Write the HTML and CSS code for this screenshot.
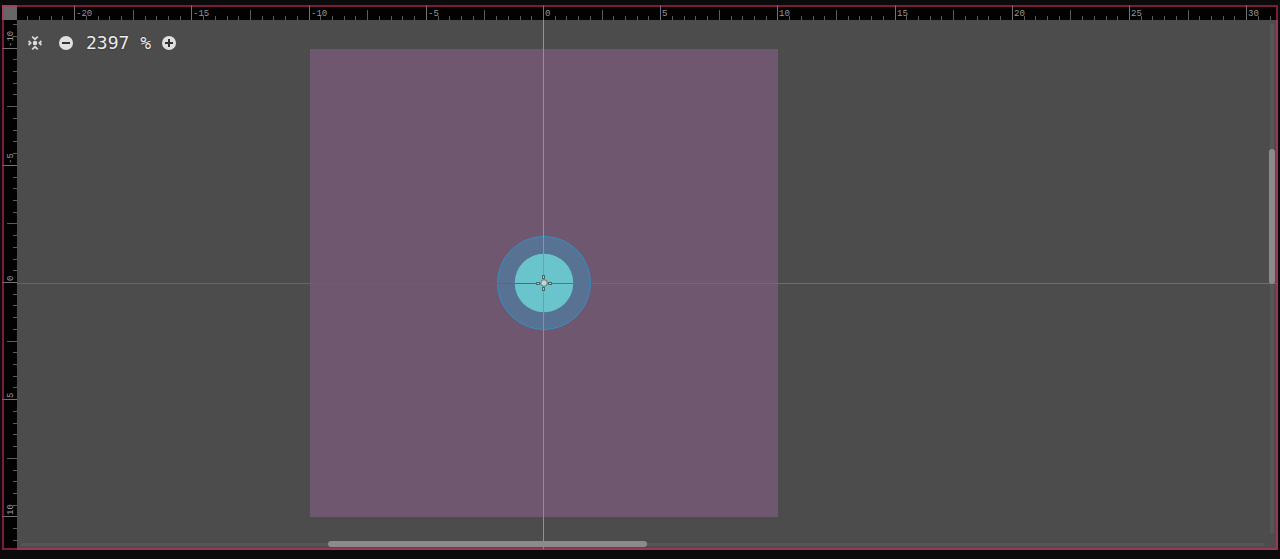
FILE: index.html
```
<!DOCTYPE html>
<html lang="en">
<head>
<meta charset="utf-8">
<title>2D Viewport</title>
<link rel="stylesheet" href="styles.css">
</head>
<body>
<main class="editor">
  <div class="corner"></div>
  <svg class="ruler ruler-x" id="ruler-x" aria-hidden="true"></svg>
  <svg class="ruler ruler-y" id="ruler-y" aria-hidden="true"></svg>
  <section class="stage">
    <svg class="scene" aria-hidden="true">
      <rect x="293" y="29" width="468" height="468" fill="#705770"/>
      <circle cx="527" cy="263" r="46.5" fill="#577292" stroke="#348fc4"/>
      <circle cx="527" cy="263" r="29.3" fill="#69c4cc"/>
      <rect x="0" y="263" width="527" height="1" fill="#b3405a"/>
      <rect x="527" y="263" width="100%" height="1" fill="#99509a"/>
      <rect x="526" y="0" width="1" height="263" fill="#83ac38"/>
      <rect x="526" y="263" width="1" height="100%" fill="#7f9c82"/>
      <g fill="#a9c9c9" stroke="#4c686b">
        <rect x="525.5" y="255.5" width="2" height="3"/>
        <rect x="525.5" y="267.5" width="2" height="3"/>
        <rect x="519.5" y="262.5" width="3" height="2"/>
        <rect x="531.5" y="262.5" width="3" height="2"/>
        <circle cx="527" cy="263" r="3.3" fill="#c4d4d0" stroke="#61787a"/>
      </g>
    </svg>
    <div class="zoom-bar">
      <button class="tool" aria-label="Center view">
        <svg width="16" height="16" viewBox="0 0 16 16" fill="none" stroke="#d8d8d8" stroke-width="1.8">
          <circle cx="8" cy="8" r="2.2" fill="#e0e0e0" stroke="none"/>
          <path d="M1.6 6 3.6 8 1.6 10M14.4 6 12.4 8l2 2M5.2 1.6 8 4.2l2.8-2.6M5.2 14.4 8 11.8l2.8 2.6"/>
        </svg>
      </button>
      <button class="tool" aria-label="Zoom out">
        <svg width="16" height="16" viewBox="0 0 16 16">
          <circle cx="8" cy="8" r="7" fill="#e0e0e0"/>
          <path d="M4 8h8" stroke="#333" stroke-width="2"/>
        </svg>
      </button>
      <button class="zoom-value">2397 %</button>
      <button class="tool" aria-label="Zoom in">
        <svg width="16" height="16" viewBox="0 0 16 16">
          <circle cx="8" cy="8" r="7" fill="#e0e0e0"/>
          <path d="M4 8h8M8 4v8" stroke="#333" stroke-width="2"/>
        </svg>
      </button>
    </div>
    <div class="scroll scroll-x"><div class="thumb"></div></div>
    <div class="scroll scroll-y"><div class="thumb"></div></div>
  </section>
</main>
<script src="rulers.js"></script>
</body>
</html>
```
FILE: styles.css
```
* {
  box-sizing: border-box;
}

body {
  margin: 0;
  height: 100vh;
  padding: 5px 2px 9px 2px;
  background: #0b0b0b;
  font-family: "DejaVu Sans Mono", "Liberation Mono", monospace;
}

.editor {
  position: relative;
  display: grid;
  grid-template-columns: 15px minmax(0, 1fr);
  grid-template-rows: 15px minmax(0, 1fr);
  height: 100%;
  overflow: hidden;
  background: #000;
}

.editor::after {
  content: "";
  position: absolute;
  inset: 0;
  border: 2px solid rgba(200, 42, 88, 0.63);
  pointer-events: none;
}

.corner {
  background: #666;
}

.ruler {
  display: block;
  width: 100%;
  height: 100%;
  background: #020202;
}

.ruler text {
  fill: #999;
  font-family: "Liberation Mono", monospace;
  font-size: 9px;
}

.ruler .tick {
  fill: #5c5c5c;
}

.ruler .tick-major {
  fill: #737373;
}

.stage {
  position: relative;
  background: #4c4c4c;
}

.scene {
  position: absolute;
  width: 100%;
  height: 100%;
}

.zoom-bar {
  position: relative;
  display: flex;
  align-items: center;
  gap: 12px;
  padding: 12px 10px;
}

.tool,
.zoom-value {
  display: flex;
  padding: 0;
  border: 0;
  background: none;
  color: #ececec;
  font-family: inherit;
}

.tool + .tool {
  margin-left: 3px;
}

.zoom-value {
  font-size: 18px;
  line-height: 21px;
  text-shadow: 0 0 2px #222;
}

.zoom-value + .tool {
  margin-left: -2px;
}

.scroll {
  position: absolute;
  border-radius: 3px;
  background: #565656;
}

.thumb {
  position: absolute;
  border-radius: 3px;
  background: #8b8b8b;
}

.scroll-x {
  right: 14px;
  bottom: 4px;
  left: 4px;
  height: 3px;
}

.scroll-x .thumb {
  top: -2px;
  left: 24.7%;
  width: 25.7%;
  height: 6px;
}

.scroll-y {
  top: 3px;
  right: 4px;
  bottom: 16px;
  width: 4px;
}

.scroll-y .thumb {
  top: 24.7%;
  left: -1px;
  width: 6px;
  height: 26.4%;
}
```
FILE: rulers.js
```
const NS = "http://www.w3.org/2000/svg";
const STEP = 11.72;

function add(parent, name, attrs, text) {
  const node = document.createElementNS(NS, name);
  for (const key in attrs) node.setAttribute(key, attrs[key]);
  if (text !== undefined) node.textContent = text;
  parent.appendChild(node);
}

function drawRuler(id, origin, vertical) {
  const svg = document.getElementById(id);
  const box = svg.getBoundingClientRect();
  const size = vertical ? box.height : box.width;
  const first = Math.ceil(-origin / STEP);
  for (let i = first; origin + i * STEP < size; i++) {
    const pos = Math.round(origin + i * STEP);
    const major = i % 10 === 0;
    const length = major ? 15 : i % 5 === 0 ? 10 : 4;
    const cls = major ? "tick tick-major" : "tick";
    if (vertical) {
      add(svg, "rect", { x: 15 - length, y: pos, width: length, height: 1, class: cls });
      if (major) add(svg, "text", { transform: `translate(11 ${pos - 1}) rotate(-90)` }, i / 2);
    } else {
      add(svg, "rect", { x: pos, y: 15 - length, width: 1, height: length, class: cls });
      if (major) add(svg, "text", { x: pos + 2, y: 11 }, i / 2);
    }
  }
}

function drawRulers() {
  document.getElementById("ruler-x").replaceChildren();
  document.getElementById("ruler-y").replaceChildren();
  drawRuler("ruler-x", 526, false);
  drawRuler("ruler-y", 262, true);
}

drawRulers();
window.addEventListener("resize", drawRulers);
```
